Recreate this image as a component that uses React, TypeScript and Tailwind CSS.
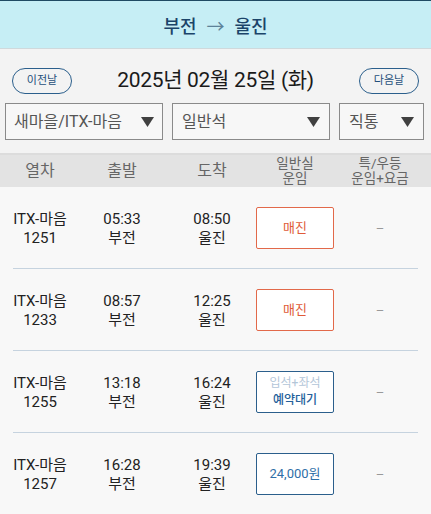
import React from "react";

const font = { fontFamily: 'Roboto, "Noto Sans CJK KR", sans-serif' };

type Row = { name: string; no: string; dep: string; arr: string; kind: "sold" | "wait" | "price" };

const rows: Row[] = [
  { name: "ITX-마음", no: "1251", dep: "05:33", arr: "08:50", kind: "sold" },
  { name: "ITX-마음", no: "1233", dep: "08:57", arr: "12:25", kind: "sold" },
  { name: "ITX-마음", no: "1255", dep: "13:18", arr: "16:24", kind: "wait" },
  { name: "ITX-마음", no: "1257", dep: "16:28", arr: "19:39", kind: "price" },
];

function Tri() {
  return (
    <svg width="13" height="10" viewBox="0 0 13 10">
      <polygon points="0,0 13,0 6.5,10" fill="#404040" />
    </svg>
  );
}

function Fare({ kind }: { kind: Row["kind"] }) {
  if (kind === "sold")
    return (
      <div className="w-[78px] h-[42px] border-[1.5px] border-[#e2694a] bg-white rounded-[2px] flex items-center justify-center text-[13px] text-[#e05a38]">
        매진
      </div>
    );
  if (kind === "wait")
    return (
      <div className="w-[78px] h-[42px] border-[1.5px] border-[#2b5f8c] bg-white rounded-[2px] flex flex-col items-center justify-center text-[12px] leading-[17px]">
        <span className="text-[#b3c6d8]">입석+좌석</span>
        <span className="text-[#23609a] font-medium">예약대기</span>
      </div>
    );
  return (
    <div className="w-[78px] h-[42px] border-[1.5px] border-[#2b5f8c] bg-white rounded-[2px] flex items-center justify-center text-[13px] text-[#2f6fa8]">
      24,000원
    </div>
  );
}

export default function App() {
  return (
    <div style={font} className="w-[431px] h-[514px] overflow-hidden bg-[#f8f8f8] flex flex-col">
      <div className="shrink-0 h-[1px] bg-[#1f4a63]" />
      <div className="shrink-0 h-[48px] pt-[3px] bg-[#c6eef5] flex items-center justify-center gap-[10px] text-[18px] font-medium text-[#1b4469] border-b border-[#cfd9dc]">
        <span>부전</span>
        <span className="text-[#5d8298] font-normal">→</span>
        <span>울진</span>
      </div>
      <div className="shrink-0 bg-[#f3f3f3] border-b-2 border-[#dcdcdc] h-[106px] flex flex-col">
        <div className="flex items-center justify-between px-[12px] pt-[13px] h-[51px]">
          <div className="w-[60px] h-[26px] rounded-full border-[1.5px] border-[#2b5f8c] flex items-center justify-center text-[11px] text-[#1f4f7a]">
            이전날
          </div>
          <div className="text-[21px] text-[#1a1a1a] tracking-[-0.3px]">2025년 02월 25일 (화)</div>
          <div className="w-[60px] h-[26px] rounded-full border-[1.5px] border-[#2b5f8c] flex items-center justify-center text-[11px] text-[#1f4f7a]">
            다음날
          </div>
        </div>
        <div className="flex px-[5px] gap-[9px] mt-[3px]">
          <div className="w-[158px] h-[37px] border border-[#8a8a8a] bg-[#f7f7f7] flex items-center justify-between pl-[8px] pr-[8px] text-[16px] text-[#555]">
            <span>새마을/ITX-마음</span>
            <Tri />
          </div>
          <div className="w-[158px] h-[37px] border border-[#8a8a8a] bg-[#f7f7f7] flex items-center justify-between pl-[9px] pr-[9px] text-[16px] text-[#555]">
            <span>일반석</span>
            <Tri />
          </div>
          <div className="w-[85px] h-[37px] border border-[#8a8a8a] bg-[#f7f7f7] flex items-center justify-between pl-[9px] pr-[9px] text-[16px] text-[#555]">
            <span>직통</span>
            <Tri />
          </div>
        </div>
      </div>
      <div className="shrink-0 h-[32px] bg-[#e3e3e3] grid grid-cols-[80px_84px_90px_82px_88px] items-center text-[#666]">
        <div className="text-center text-[16px]">열차</div>
        <div className="text-center text-[16px]">출발</div>
        <div className="text-center text-[16px] pl-[6px]">도착</div>
        <div className="text-center text-[13.5px] leading-[15px]">일반실<br />운임</div>
        <div className="text-center text-[13.5px] leading-[15px]">특/우등<br />운임+요금</div>
      </div>
      <div className="shrink-0">
        {rows.map((r, i) => (
          <div key={i} className="flex flex-col">
            <div className="h-[81px] pt-[2px] grid grid-cols-[80px_84px_90px_82px_88px] items-center text-[15px] leading-[19px] text-[#222]">
              <div className="text-center">{r.name}<br />{r.no}</div>
              <div className="text-center">{r.dep}<br />부전</div>
              <div className="text-center pl-[6px]">{r.arr}<br />울진</div>
              <div className="flex justify-center -mt-[2px]"><Fare kind={r.kind} /></div>
              <div className="text-center text-[#999] text-[13px]">–</div>
            </div>
            <div className={i === rows.length - 1 ? "mx-[13px] h-[2px] bg-[#c5cbd2]" : "mx-[13px] h-[1px] bg-[#c6d3df]"} />
          </div>
        ))}
      </div>
    </div>
  );
}
